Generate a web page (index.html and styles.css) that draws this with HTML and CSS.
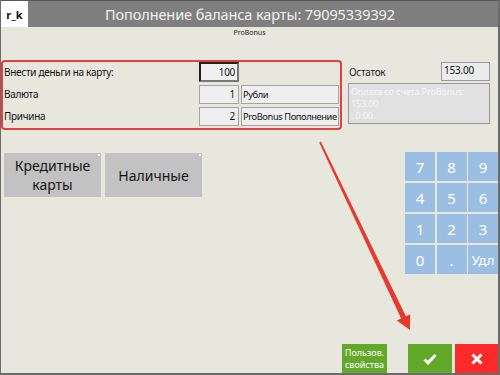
FILE: index.html
```html
<!DOCTYPE html>
<html lang="ru">
<head>
    <meta charset="UTF-8">
    <meta name="viewport" content="width=device-width, initial-scale=1.0">
    <title>Пополнение баланса карты</title>
    <link rel="stylesheet" href="styles.css">
</head>
<body>

<div class="frame">
    <header class="header">
        <span class="logo">r_k</span>
        <span class="title">Пополнение баланса карты: 79095339392</span>
    </header>

    <div class="brand">ProBonus</div>

    <div class="top">
        <div class="form">
            <div class="row">
                <span class="label">Внести деньги на карту:</span>
                <span class="field num active">100</span>
            </div>
            <div class="row">
                <span class="label">Валюта</span>
                <span class="field num">1</span>
                <span class="field text">Рубли</span>
            </div>
            <div class="row">
                <span class="label">Причина</span>
                <span class="field num">2</span>
                <span class="field text">ProBonus Пополнение</span>
            </div>
        </div>

        <div class="side">
            <div class="rest">
                <span class="rest-label">Остаток</span>
                <span class="rest-value">153.00</span>
            </div>
            <div class="info">
                <div>Оплата со счета ProBonus:</div>
                <div>153.00</div>
                <div>: 0.00</div>
            </div>
        </div>
    </div>

    <div class="middle">
        <div class="pay">
            <button class="pay-btn">Кредитные<br>карты</button>
            <button class="pay-btn">Наличные</button>
        </div>

        <div class="numpad">
            <button class="key">7</button>
            <button class="key">8</button>
            <button class="key">9</button>
            <button class="key">4</button>
            <button class="key">5</button>
            <button class="key">6</button>
            <button class="key">1</button>
            <button class="key">2</button>
            <button class="key">3</button>
            <button class="key">0</button>
            <button class="key">.</button>
            <button class="key key-del">Удл</button>
        </div>
    </div>

    <div class="footer">
        <button class="btn btn-props">Пользов.<br>свойства</button>
        <button class="btn btn-ok">
            <svg width="14" height="12" viewBox="0 0 14 12"><path d="M1.5 6.5 L5 9.8 L12.5 2" fill="none" stroke="#fff" stroke-width="3"/></svg>
        </button>
        <button class="btn btn-cancel">
            <svg width="12" height="12" viewBox="0 0 12 12"><path d="M1.5 1.5 L10.5 10.5 M10.5 1.5 L1.5 10.5" fill="none" stroke="#fff" stroke-width="3"/></svg>
        </button>
    </div>

    <svg class="arrow" width="500" height="375" viewBox="0 0 500 375">
        <polygon points="319.2,142.4 320.8,141.6 406.4,317.2 401.6,319.6" fill="#e53a2e"/>
        <polygon points="410,330 396.8,320.6 410.2,314.2" fill="#e53a2e"/>
    </svg>
</div>

</body>
</html>
```

FILE: styles.css
```css
body {
    margin: 0;
    padding: 0;
    font-family: "Noto Sans", "DejaVu Sans", sans-serif;
}

.frame {
    position: relative;
    width: 500px;
    height: 375px;
    box-sizing: border-box;
    background-color: #e8e7de;
    border-left: 1px solid #6b6b6b;
    border-right: 2px solid #6b6b6b;
    border-bottom: 2px solid #6b6b6b;
    display: flex;
    flex-direction: column;
    overflow: hidden;
}

.header {
    height: 27px;
    box-sizing: border-box;
    border-top: 1px solid #555;
    background-color: #7f7f7f;
    display: flex;
    align-items: center;
}

.header .logo {
    width: 27px;
    height: 100%;
    background-color: #fff;
    color: #111;
    font-size: 11px;
    font-weight: bold;
    display: flex;
    align-items: center;
    justify-content: center;
}

.header .title {
    flex: 1;
    text-align: center;
    color: #f2f2f2;
    font-size: 14.5px;
    letter-spacing: -0.1px;
    padding-right: 26px;
}

.brand {
    height: 12px;
    text-align: center;
    font-size: 7px;
    line-height: 12px;
    color: #222;
}

.top {
    margin-top: 21px;
    display: flex;
    align-items: flex-start;
}

.form {
    width: 341px;
    box-sizing: border-box;
    border: 2px solid #e2403a;
    border-radius: 4px;
    padding: 0 0 2px 0;
    display: flex;
    flex-direction: column;
    gap: 2px;
}

.row {
    height: 20px;
    display: flex;
    align-items: center;
    gap: 2px;
}

.label {
    width: 193px;
    padding-left: 1px;
    font-size: 10px;
    letter-spacing: -0.3px;
    color: #111;
}

.field {
    height: 19px;
    box-sizing: border-box;
    background-color: #eeeeee;
    border: 1px solid #a3a3a3;
    font-size: 10px;
    letter-spacing: -0.3px;
    line-height: 17px;
    color: #111;
}

.field.num {
    width: 40px;
    text-align: right;
    padding-right: 3px;
}

.field.active {
    height: 20px;
    background-color: #f0f0f0;
    border: 2px solid #1f1f1f;
    border-right-color: #777;
    border-bottom-color: #777;
    line-height: 16px;
    padding-right: 2px;
}

.field.text {
    width: 98px;
    padding-left: 1px;
    font-size: 9.3px;
    letter-spacing: -0.4px;
    white-space: nowrap;
    overflow: hidden;
}

.side {
    margin-left: 6px;
    width: 142px;
    padding-top: 2px;
    display: flex;
    flex-direction: column;
    gap: 2px;
}

.rest {
    display: flex;
    justify-content: space-between;
    align-items: center;
    height: 19px;
}

.rest-label {
    padding-left: 1px;
    font-size: 10px;
    letter-spacing: -0.3px;
    color: #222;
}

.rest-value {
    width: 49px;
    height: 19px;
    box-sizing: border-box;
    background-color: #ececec;
    border: 1px solid #999;
    font-size: 10px;
    letter-spacing: -0.2px;
    line-height: 15px;
    padding-left: 2px;
    color: #111;
}

.info {
    height: 41px;
    box-sizing: border-box;
    background-color: #e1e1e1;
    border: 1px solid #999;
    padding: 2px 0 0 2px;
    font-size: 9px;
    letter-spacing: -0.1px;
    line-height: 12px;
    color: #f7f7f7;
    white-space: nowrap;
    overflow: hidden;
}

.middle {
    margin-top: 22px;
    display: flex;
    justify-content: space-between;
    align-items: flex-start;
}

.pay {
    margin-top: 1px;
    padding-left: 3px;
    display: flex;
    gap: 4px;
}

.pay-btn {
    position: relative;
    width: 97px;
    height: 44px;
    border: none;
    background-color: #c2c2c2;
    color: #151515;
    font-family: inherit;
    font-size: 14px;
    line-height: 19px;
    padding: 0;
}

.pay-btn::after {
    content: "";
    position: absolute;
    top: 1px;
    right: 1px;
    width: 2px;
    height: 2px;
    background-color: #fff;
}

.numpad {
    display: grid;
    grid-template-columns: repeat(3, 30px);
    grid-auto-rows: 29px;
    gap: 2px 1.5px;
}

.key {
    border: none;
    padding: 0;
    background-color: #9bbfe2;
    color: #fff;
    font-family: inherit;
    font-size: 15px;
}

.key-del {
    font-size: 13px;
}

.footer {
    margin-top: auto;
    display: flex;
    justify-content: flex-end;
}

.btn {
    height: 29px;
    border: none;
    padding: 0;
    color: #fff;
    font-family: inherit;
    display: flex;
    align-items: center;
    justify-content: center;
}

.btn-props {
    width: 45px;
    margin-right: 21px;
    background-color: #62a92a;
    font-size: 9px;
    line-height: 12px;
}

.btn-ok {
    width: 44px;
    margin-right: 3px;
    background-color: #62a92a;
}

.btn-cancel {
    width: 43px;
    background-color: #fd2a2a;
}

.arrow {
    position: absolute;
    top: 0;
    left: -1px;
    pointer-events: none;
}
```
